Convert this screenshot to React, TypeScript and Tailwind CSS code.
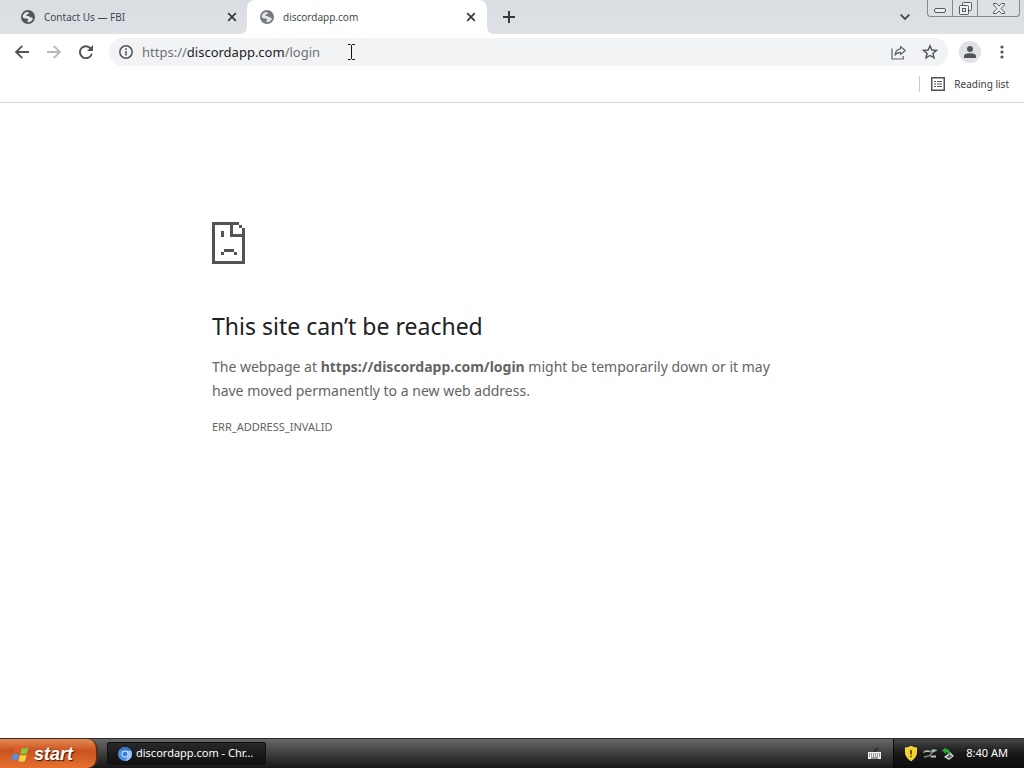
// ============================================================
// App — Browser window with an error page, above the taskbar
// ============================================================

import React from 'react';

const URL_HOST = 'discordapp.com';

function GlobeIcon({ className }: { className: string }) {
  return (
    <svg viewBox="0 0 14 14" className={`size-[14px] shrink-0 ${className}`} aria-hidden>
      <circle cx="7" cy="7" r="7" fill="currentColor" />
      <path d="M1.6 7.2 2.2 4.8 4.2 2.6 6.8 2 8.2 3 7 4.2 5.6 4.6 5.4 6 7.6 6 9 7.2 10.8 7.6 12 8.8 10.4 11 8 12.3 6.4 12 6.6 10.6 7.4 9.4 6.2 8.6 3.8 8.4Z" fill="#e3e6eb" />
    </svg>
  );
}

function CloseIcon() {
  return (
    <svg viewBox="0 0 10 10" className="size-[10px]" aria-hidden>
      <path d="M1.2 1.2 8.8 8.8M8.8 1.2 1.2 8.8" stroke="#36393d" strokeWidth="1.7" />
    </svg>
  );
}

function TabStrip() {
  return (
    <header className="flex h-[34px] shrink-0 items-stretch bg-linear-to-b from-[#d9dce1] to-[#dee1e6] text-[10px] text-[#45494d]">
      <div className="flex w-[247px] items-center gap-[9px] pl-[21px] pr-[10px]">
        <GlobeIcon className="text-[#53575b]" />
        <span className="flex-1 truncate">Contact Us — FBI</span>
        <button className="flex size-[10px] items-center justify-center" aria-label="Close Contact Us"><CloseIcon /></button>
      </div>
      <div className="relative flex w-[240px] items-center gap-[9px] rounded-t-lg bg-white pl-[13px] pr-[11px]">
        <svg viewBox="0 0 8 8" className="absolute -left-2 bottom-0 size-2" aria-hidden><path d="M8 0v8H0Q8 8 8 0Z" fill="#fff" /></svg>
        <svg viewBox="0 0 8 8" className="absolute -right-2 bottom-0 size-2" aria-hidden><path d="M0 0v8h8Q0 8 0 0Z" fill="#fff" /></svg>
        <GlobeIcon className="text-[#777a7e]" />
        <span className="flex-1 truncate">{URL_HOST}</span>
        <button className="flex size-[10px] items-center justify-center" aria-label="Close discordapp.com"><CloseIcon /></button>
      </div>
      <button className="ml-4 self-center" aria-label="New tab">
        <svg viewBox="0 0 12 12" className="size-3"><path d="M6 0v12M0 6h12" stroke="#36393d" strokeWidth="2" /></svg>
      </button>
      <button className="ml-auto mr-[17px] self-center" aria-label="Search tabs">
        <svg viewBox="0 0 10 6" className="size-[10px]"><path d="M.7.7 5 5 9.3.7" fill="none" stroke="#45494d" strokeWidth="1.8" /></svg>
      </button>
      <div className="mr-1 flex h-[17px] overflow-hidden rounded-b-[4px] border border-t-0 border-[#85888d] bg-[#dde0e5]">
        <button className="flex w-6 items-end justify-center pb-[3px]" aria-label="Minimize">
          <svg viewBox="0 0 12 5" className="h-[5px] w-3"><rect x=".5" y=".5" width="11" height="4" rx="1.5" fill="#eef0f2" stroke="#55585d" /></svg>
        </button>
        <button className="flex w-[26px] items-center justify-center border-x border-[#85888d]" aria-label="Restore">
          <svg viewBox="0 0 13 13" className="size-[13px]" fill="#eef0f2" stroke="#55585d">
            <rect x="3.5" y=".5" width="9" height="8" rx="1" />
            <rect x=".5" y="3.5" width="9" height="9" rx="1" />
            <rect x="3.5" y="6.5" width="3" height="3" />
          </svg>
        </button>
        <button className="flex w-[41px] items-center justify-center" aria-label="Close window">
          <svg viewBox="0 0 12 11" className="h-[11px] w-3">
            <path d="M.5.5h3L6 3.2 8.5.5h3v1.4L8 5.5l3.5 3.6v1.4h-3L6 7.8 3.5 10.5h-3V9.1L4 5.5.5 1.9Z" fill="#eef0f2" stroke="#55585d" />
          </svg>
        </button>
      </div>
    </header>
  );
}

function Toolbar() {
  return (
    <div className="flex h-9 shrink-0 items-center bg-white pl-[15px] pr-5">
      <button aria-label="Back">
        <svg viewBox="0 0 14 14" className="size-[14px]"><path d="M14 7H1.5M7.3 .8 1.1 7l6.2 6.2" fill="none" stroke="#505357" strokeWidth="1.8" /></svg>
      </button>
      <button className="ml-[18px]" aria-label="Forward" disabled>
        <svg viewBox="0 0 14 14" className="size-[14px]"><path d="M0 7h12.5M6.7 .8 12.9 7l-6.2 6.2" fill="none" stroke="#b6b8ba" strokeWidth="1.8" /></svg>
      </button>
      <button className="ml-[18px]" aria-label="Reload">
        <svg viewBox="0 0 14 14" className="size-[14px]">
          <path d="M12 4A6 6 0 1 0 12.8 8.6" fill="none" stroke="#505357" strokeWidth="1.9" />
          <path d="M14 0v6H8Z" fill="#505357" />
        </svg>
      </button>
      <div className="ml-4 flex h-7 flex-1 items-center rounded-full bg-[#f1f3f4] px-[10px]">
        <svg viewBox="0 0 14 14" className="size-[14px]" aria-hidden>
          <circle cx="7" cy="7" r="6.2" fill="none" stroke="#505357" strokeWidth="1.5" />
          <path d="M7 6v4.5M7 3.3v1.6" stroke="#505357" strokeWidth="1.5" />
        </svg>
        <a href="https://discordapp.com/login" className="ml-[9px] text-[13px] leading-5 text-[#6d7175]">
          https://<span className="text-[#202124]">{URL_HOST}</span>/login
        </a>
        {/* Text pointer */}
        <svg viewBox="0 0 7 16" className="ml-7 h-4 w-[7px]" aria-hidden>
          <path d="M0 .5h2.5l1 1 1-1H7M3.5 1v14M0 15.5h2.5l1-1 1 1H7" fill="none" stroke="#111" />
        </svg>
        <button className="ml-auto" aria-label="Share">
          <svg viewBox="0 0 15 15" className="size-[15px]" fill="none" stroke="#5f6368" strokeWidth="1.2">
            <path d="M1 3.5V14h11.2v-3" />
            <path d="M9.5 1.5 14.2 5.5 9.5 9.5V7.3C7 7.2 5.3 8.2 4 10.2 4.3 6.5 6.2 4.2 9.5 3.8Z" strokeLinejoin="round" />
          </svg>
        </button>
        <button className="ml-4" aria-label="Bookmark this tab">
          <svg viewBox="0 0 16 16" className="size-4"><path d="M8 1.8 9.8 6l4.6.4-3.5 3 1.1 4.4L8 11.5l-4 2.3 1.1-4.4-3.5-3L6.2 6Z" fill="none" stroke="#505357" strokeWidth="1.4" /></svg>
        </button>
      </div>
      <button className="ml-[11px] flex size-[22px] items-center justify-center rounded-full bg-[#dfe1e5]" aria-label="Profile">
        <svg viewBox="0 0 12 12" className="size-3" fill="#505357"><circle cx="6" cy="3" r="3" /><path d="M0 12V10Q0 7.3 6 7.3T12 10v2Z" /></svg>
      </button>
      <button className="ml-[19px]" aria-label="Menu">
        <svg viewBox="0 0 4 14" className="h-[14px] w-1" fill="#505357"><circle cx="2" cy="2" r="1.6" /><circle cx="2" cy="7" r="1.6" /><circle cx="2" cy="12" r="1.6" /></svg>
      </button>
    </div>
  );
}

function BookmarksBar() {
  return (
    <div className="flex h-[33px] shrink-0 items-center justify-end border-b border-[#d6d8db] bg-white pr-[15px] pb-1">
      <div className="h-4 w-px bg-[#c8cacd]" />
      <button className="ml-[11px] flex items-center gap-[9px] text-[10px] text-[#3c4043]">
        <svg viewBox="0 0 14 14" className="size-[14px]" aria-hidden>
          <rect x=".75" y=".75" width="12.5" height="12.5" fill="none" stroke="#505357" strokeWidth="1.5" />
          <path d="M3 4.5h2M3 7h2M3 9.5h2M6 4.5h5M6 7h5M6 9.5h5" stroke="#505357" strokeWidth="1.2" />
        </svg>
        Reading list
      </button>
    </div>
  );
}

function ErrorPage() {
  return (
    <main className="flex-1 bg-white">
      <div className="mx-auto max-w-[600px] pt-[119px] text-[#646464]">
        <svg viewBox="0 0 33 42" className="h-[42px] w-[33px]" fill="#535353" shapeRendering="crispEdges" aria-hidden>
          <path d="M0 0h27v3h3v3h3v36H0ZM3 3v36h27V15H18V3ZM21 3v9h9V6h-3V3Z" fillRule="evenodd" />
          <path d="M27 3h3v3h-3ZM9 9h3v6H9ZM12 27h10v3H12ZM9 30h3v3H9ZM22 30h3v3h-3Z" />
        </svg>
        <h1 className="mt-12 text-[23px] leading-[28px] text-[#202124]">This site can’t be reached</h1>
        <p className="mt-[15px] text-[14px] leading-6">
          The webpage at <strong>https://discordapp.com/login</strong> might be temporarily down or it may
          <br className="hidden sm:inline" /> have moved permanently to a new web address.
        </p>
        <p className="mt-3 text-[11px] leading-6">ERR_ADDRESS_INVALID</p>
      </div>
    </main>
  );
}

function Taskbar() {
  return (
    <footer className="flex h-[30px] shrink-0 items-stretch border-t border-[#2b2b2b] bg-linear-to-b from-[#696969] via-[#3f3f3f] to-[#171717] text-[11px] text-white">
      <button className="flex w-[98px] items-center gap-1 rounded-r-[10px] border-r-2 border-[#54301c] bg-linear-to-b from-[#e58a50] via-[#c9531f] via-40% to-[#e5702f] pl-[10px]">
        <svg viewBox="0 0 20 18" className="h-[18px] w-5" aria-hidden>
          <path d="M5 2Q8 0 10.5 2L9 8Q6 6.5 3.3 8Z" fill="#e8572b" />
          <path d="M11.7 2.8Q15 4.5 18.5 2.5L17 8.5Q13.5 10 10.3 8.5Z" fill="#8ac83d" />
          <path d="M3 9.2Q6 7.7 8.8 9.2L7.3 15.5Q4.5 14 1.3 15.5Z" fill="#5b8de0" />
          <path d="M10 9.8Q13.5 11.3 16.7 9.8L15 16Q11.5 17.5 8.4 16Z" fill="#f5d443" />
        </svg>
        <span className="font-['Liberation_Sans',sans-serif] text-[18px] font-bold italic leading-6 text-shadow-[1px_1px_1px_#3a1606]">start</span>
      </button>
      <button className="my-[3px] ml-[9px] flex w-[159px] items-center gap-1 rounded-[2px] border border-[#111] bg-linear-to-b from-[#282828] to-[#101010] px-[10px]">
        <svg viewBox="0 0 14 14" className="size-[14px] shrink-0" aria-hidden>
          <circle cx="7" cy="7" r="7" fill="#4e8fe8" />
          <path d="M7 3.5h6A7 7 0 0 1 7 14l3-5Z" fill="#9bc5fa" />
          <path d="M1 3.5A7 7 0 0 1 13 3.5H7Z" fill="#3973ce" />
          <circle cx="7" cy="7" r="3.4" fill="#dcecff" />
          <circle cx="7" cy="7" r="2.5" fill="#397ee0" />
        </svg>
        <span className="whitespace-nowrap">discordapp.com - Chr…</span>
      </button>
      <button className="ml-auto mr-3 self-center" aria-label="Keyboard">
        <svg viewBox="0 0 13 13" className="size-[13px]">
          <path d="M6.5 5V3.5Q6.5 2.5 8 2.5t2-1.5" fill="none" stroke="#111" />
          <rect y="5" width="13" height="7" fill="#eee" />
          <path d="M1 7h11M1 9h11" stroke="#444" strokeDasharray="1 1" />
          <path d="M3 11h7" stroke="#444" />
        </svg>
      </button>
      <div className="flex items-center border-l border-[#080808] bg-linear-to-b from-[#484848] via-[#191919] to-[#0b0b0b] pl-[11px] pr-4">
        <svg viewBox="0 0 12 15" className="h-[15px] w-3" aria-hidden>
          <path d="M6 0Q8.5 2 12 2 12.5 11 6 15-.5 11 0 2 3.5 2 6 0Z" fill="#f4d526" stroke="#fff18a" strokeWidth=".7" />
          <path d="M6 4v4.5M6 9.7v1.6" stroke="#473a00" strokeWidth="1.6" />
        </svg>
        <svg viewBox="0 0 14 12" className="ml-[6px] h-3 w-[14px]" aria-hidden>
          <path d="M0 4.5 5 3l4 1 5-2M1 9l5-1 5-5" fill="none" stroke="#80938b" strokeWidth="1.3" />
          <path d="M1 2.5h5V4H2ZM9 1.5h4l-1 2H8ZM7 7.5h6v2H8Z" fill="#b9c2bd" />
        </svg>
        <svg viewBox="0 0 14 14" className="ml-1 size-[14px]" aria-hidden>
          <path d="m3 10 6-5 4 4-5 4Z" fill="#ccd3cf" />
          <path d="M5.5 10 9 7l2 2.5-3 2Z" fill="#596862" />
          <path d="M1 3.5 5 .5v1.7q4-.5 4 4.3L7 7.5Q7 5 5 5v2Z" fill="#2ca83e" />
        </svg>
        <time className="ml-[11px]">8:40 AM</time>
      </div>
    </footer>
  );
}

export default function App() {
  return (
    <div className="flex h-screen flex-col overflow-hidden bg-white font-['Noto_Sans','Open_Sans',sans-serif]">
      <TabStrip />
      <Toolbar />
      <BookmarksBar />
      <ErrorPage />
      <Taskbar />
    </div>
  );
}
